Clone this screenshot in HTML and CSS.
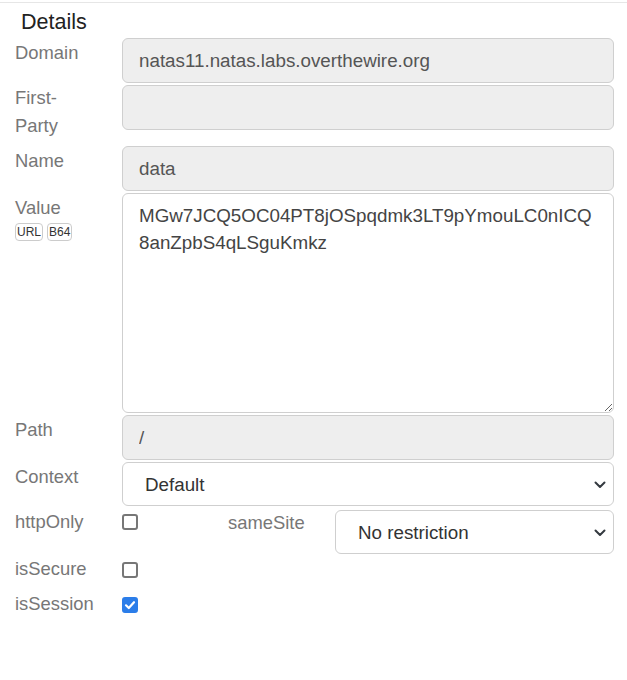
FILE: index.html
```html
<!DOCTYPE html>
<html>
<head>
<meta charset="utf-8">
<link rel="stylesheet" href="styles.css">
</head>
<body>
<div class="panel">
  <div class="title">Details</div>
  <div class="row">
    <div class="label">Domain</div>
    <div class="control"><input class="field ro" readonly value="natas11.natas.labs.overthewire.org"></div>
  </div>
  <div class="row">
    <div class="label label-fp">First-<br>Party</div>
    <div class="control"><input class="field ro" readonly value=""></div>
  </div>
  <div class="row">
    <div class="label">Name</div>
    <div class="control"><input class="field ro" readonly value="data"></div>
  </div>
  <div class="row">
    <div class="label">Value
      <div class="badges"><span class="badge">URL</span><span class="badge">B64</span></div>
    </div>
    <div class="control"><textarea class="field area">MGw7JCQ5OC04PT8jOSpqdmk3LT9pYmouLC0nICQ8anZpbS4qLSguKmkz</textarea></div>
  </div>
  <div class="row">
    <div class="label">Path</div>
    <div class="control"><input class="field ro" readonly value="/"></div>
  </div>
  <div class="row">
    <div class="label">Context</div>
    <div class="control sel-wrap">
      <select class="field sel"><option>Default</option></select>
      <svg class="chev" viewBox="0 0 12 8" width="12" height="8"><path d="M1.5 1.5 6 6 10.5 1.5" fill="none" stroke="#343a40" stroke-width="2" stroke-linecap="round" stroke-linejoin="round"/></svg>
    </div>
  </div>
  <div class="row row-http">
    <div class="label">httpOnly</div>
    <div class="control split">
      <span class="cb"></span>
      <span class="ss-label">sameSite</span>
      <div class="sel-wrap ss">
        <select class="field sel"><option>No restriction</option></select>
        <svg class="chev" viewBox="0 0 12 8" width="12" height="8"><path d="M1.5 1.5 6 6 10.5 1.5" fill="none" stroke="#343a40" stroke-width="2" stroke-linecap="round" stroke-linejoin="round"/></svg>
      </div>
    </div>
  </div>
  <div class="row row-cb">
    <div class="label">isSecure</div>
    <div class="control"><span class="cb"></span></div>
  </div>
  <div class="row row-cb">
    <div class="label">isSession</div>
    <div class="control"><span class="cb on"><svg viewBox="0 0 16 16" width="16" height="16"><path d="M4 8.3 6.8 11 12 5.2" fill="none" stroke="#fff" stroke-width="2.2" stroke-linecap="round" stroke-linejoin="round"/></svg></span></div>
  </div>
</div>
</body>
</html>
```
FILE: styles.css
```css
html, body {
  margin: 0;
  padding: 0;
  background: #fff;
}
body {
  font-family: "Liberation Sans", Arial, sans-serif;
  font-size: 18.4px;
}
.panel {
  border-top: 1px solid #e6e6e6;
  margin-top: 2px;
  padding: 6px 13px 0 15px;
}
.title {
  font-size: 21.5px;
  color: #222;
  line-height: 28px;
  padding-left: 6px;
  margin-top: -1px;
  margin-bottom: 2px;
}
.row {
  display: flex;
  margin-bottom: 2px;
}
.label {
  width: 107px;
  flex: none;
  color: #777;
  line-height: 28px;
  margin-top: 1px;
}
.label.label-fp {
  margin-top: -1px;
  padding-bottom: 4px;
}
.control {
  flex: 1;
  min-width: 0;
}
.field {
  box-sizing: border-box;
  width: 100%;
  height: 45px;
  border: 1px solid #cfcfcf;
  border-radius: 6px;
  font-family: "Liberation Sans", Arial, sans-serif;
  font-size: 18.8px;
  color: #555;
  padding: 1px 16px 0;
  margin: 0;
  display: block;
  background: #fff;
  outline: none;
}
.ro {
  background: #eee;
}
.area {
  height: 220px;
  resize: vertical;
  line-height: 27px;
  padding: 8px 16px 6px;
  color: #444;
}
.badges {
  display: flex;
  gap: 4px;
  margin-top: 1px;
}
.badge {
  font-size: 12px;
  line-height: 14px;
  color: #333;
  border: 1px solid #ccc;
  border-radius: 4px;
  padding: 1px 1px;
}
.sel-wrap {
  position: relative;
}
.sel {
  appearance: none;
  -webkit-appearance: none;
  padding: 0 22px;
  height: 44px;
  color: #333;
}
.chev {
  position: absolute;
  right: 8px;
  top: 19px;
  pointer-events: none;
}
.row-http {
  margin-bottom: 0;
  height: 46px;
}
.row-http .label {
  margin-top: 0;
}
.split {
  display: flex;
  align-items: flex-start;
}
.split .ss {
  margin-top: 2px;
}
.cb {
  box-sizing: border-box;
  width: 16px;
  height: 16px;
  border: 2px solid #777;
  border-radius: 3px;
  display: block;
  margin-top: 6px;
  flex: none;
}
.cb.on {
  background: #2b7de9;
  border-color: #2b7de9;
}
.cb.on svg {
  display: block;
  margin: -2px;
}
.ss-label {
  color: #777;
  margin-left: 90px;
  line-height: 28px;
  margin-top: 1px;
  width: 107px;
  flex: none;
}
.ss {
  flex: 1;
}
.row-cb {
  height: 35px;
  margin-bottom: 0;
}
.row-cb .cb {
  margin-top: 8px;
}
```
